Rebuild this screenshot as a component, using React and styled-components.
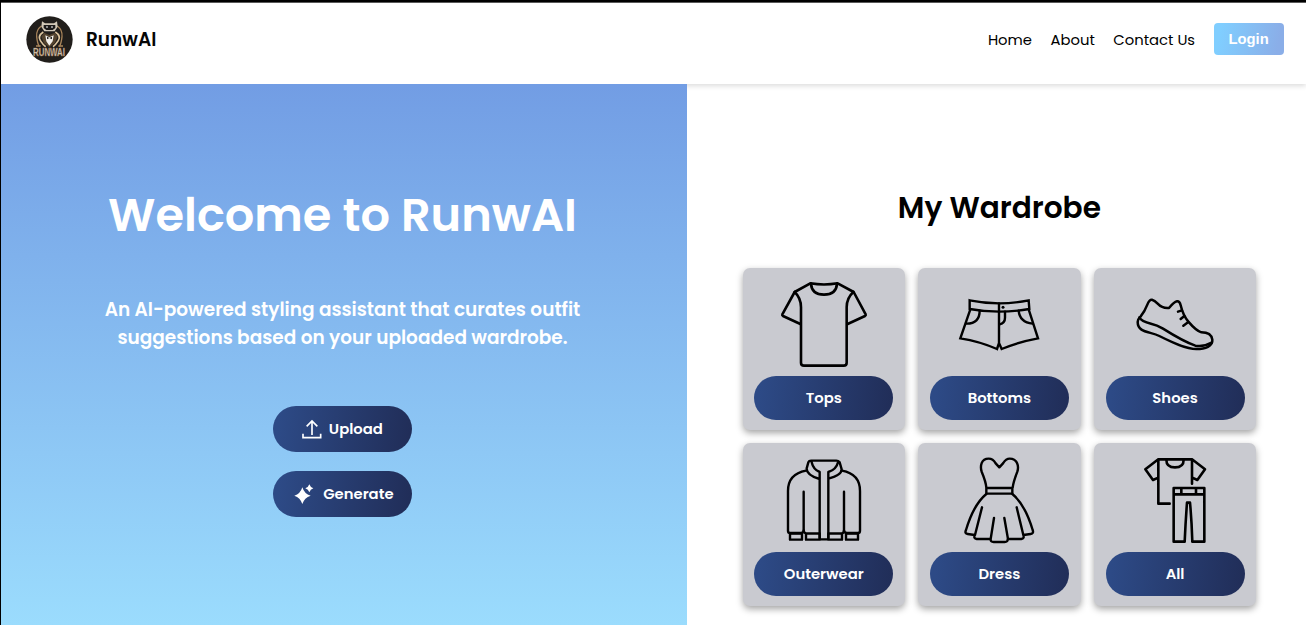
import React from "react";
import styled, { createGlobalStyle } from "styled-components";

const GlobalStyle = createGlobalStyle`
  *, *::before, *::after { box-sizing: border-box; }
  body {
    margin: 0;
    background: #fff;
    overflow: hidden;
    font-family: "Poppins", "Inter", "Open Sans", sans-serif;
  }
  button { font-family: inherit; border: 0; padding: 0; cursor: pointer; }
  h1, h2, p { margin: 0; }
`;

const Page = styled.div`
  display: flex;
  flex-direction: column;
  height: 625px;
  border-top: 2px solid #000;
  border-left: 1px solid #000;
  background: #fff;
`;

const Header = styled.header`
  display: flex;
  flex: none;
  align-items: center;
  justify-content: space-between;
  height: 82px;
  padding: 0 22.4px 9px 24.6px;
  border-top: 1px solid #5a5a5a;
  background: #fff;
  box-shadow: 0 2px 5px rgba(0, 0, 0, 0.14);
`;

const Brand = styled.div`
  display: flex;
  align-items: center;
  gap: 13.4px;
  font-size: 18.5px;
  font-weight: 600;
  color: #060606;
`;

const Nav = styled.nav`
  display: flex;
  align-items: center;
  gap: 18.5px;
`;

const NavLink = styled.a`
  padding-top: 1px;
  font-size: 14.8px;
  color: #000;
  white-space: nowrap;
`;

const LoginButton = styled.button`
  width: 70px;
  height: 32px;
  border-radius: 4px;
  color: #fff;
  font-family: Arial, "Liberation Sans", sans-serif;
  font-size: 14.8px;
  font-weight: 700;
  background: linear-gradient(100deg, #80ceff 10%, #8aaee8 90%);
`;

const Main = styled.main`
  display: flex;
  flex: 1;
  min-height: 0;
`;

const Hero = styled.section`
  display: flex;
  flex-direction: column;
  align-items: center;
  flex: none;
  position: relative;
  width: 686px;
  padding: 100px 3px 0 0;
  color: #fff;
  text-align: center;
  background: linear-gradient(180deg, #729de4 0%, #9bdcfd 100%);
`;

const HeroTitle = styled.h1`
  height: 62px;
  line-height: 62px;
  font-size: 46.3px;
  font-weight: 600;
  white-space: nowrap;
`;

const HeroText = styled.p`
  margin-top: 49.6px;
  line-height: 28px;
  font-size: 18.5px;
  font-weight: 600;
  white-space: nowrap;
`;

const TextLine = styled.span`
  display: block;
`;

const HeroActions = styled.div`
  display: flex;
  flex-direction: column;
  gap: 18.6px;
  margin-top: 54.5px;
`;

const PillButton = styled.button`
  display: flex;
  align-items: center;
  justify-content: center;
  gap: ${(p) => p.$gap || 0};
  width: 139px;
  height: ${(p) => p.$height};
  padding-left: ${(p) => p.$indent || 0};
  border-radius: 23.2px;
  color: #fff;
  font-size: 14.8px;
  font-weight: 600;
  background: linear-gradient(96deg, #2d4a86 5%, #212e59 97%);
`;

const Wardrobe = styled.section`
  display: flex;
  flex-direction: column;
  align-items: center;
  flex: 1;
  padding: 100px 0 0 5.8px;
`;

const WardrobeTitle = styled.h2`
  height: 46px;
  line-height: 47px;
  font-size: 29.6px;
  font-weight: 600;
  color: #000;
`;

const CardGrid = styled.div`
  display: grid;
  grid-template-columns: repeat(3, 162.4px);
  grid-auto-rows: 162.4px;
  gap: 13.3px;
  margin-top: 37.7px;
`;

const Card = styled.article`
  display: flex;
  flex-direction: column;
  align-items: center;
  gap: 7px;
  padding-top: 11.3px;
  border-radius: 7px;
  background: #c9cad0;
  box-shadow: 0 3px 7px rgba(0, 0, 0, 0.36);
`;

const CardIcon = styled.svg`
  display: block;
  flex: none;
  width: 90px;
  height: 90px;
  fill: none;
  stroke: #000;
  stroke-width: 7.8;
  stroke-linecap: round;
  stroke-linejoin: round;
`;

const LogoSvg = styled.svg`
  display: block;
  width: 47px;
  height: 47px;
  overflow: visible;
`;

function Logo() {
  return (
    <LogoSvg viewBox="0 0 141 141">
      <circle cx="70.5" cy="70.5" r="69.5" fill="#211e1b" />
      <g fill="none" stroke="#a9855b" strokeWidth="4">
        <path d="M46 30Q30 42 32 62t8 30M94 30q16 12 14 32t-8 30" />
        <path d="M30 90h14M97 90h14" />
      </g>
      <g fill="none" stroke="#dcc59e" strokeWidth="5">
        <path d="M52 48Q34 60 43 74t16 18M88 48q18 12 9 26T81 92" />
      </g>
      <path d="m48 16 9 6h27l9-6 2 16-9 14H55l-9-14z" fill="#d3c9b8" />
      <path d="M53 27h35v9l-8 6H61l-8-6z" fill="#1d1b1a" />
      <path d="M60 33h6m9 0h6" stroke="#fff" strokeWidth="3" />
      <path d="m54 50 16 7 17-7 8 12-9 20-16 12-16-12-8-20z" fill="#54442f" />
      <path d="m58 58 12 6 13-6-3 18-10 13-9-13z" fill="#f4f2ec" />
      <path d="m63 62 7 4 8-4v8l-8-4-7 4z" fill="#201d1b" />
      <text
        x="69"
        y="119"
        textAnchor="middle"
        fontFamily="Liberation Sans, sans-serif"
        fontSize="32"
        fontWeight="700"
        textLength="96"
        lengthAdjust="spacingAndGlyphs"
        fill="#ddd7cf"
        stroke="#8a6238"
        strokeWidth="1.5"
      >
        RUNWAI
      </text>
    </LogoSvg>
  );
}

const ICONS = {
  Tops: (
    <CardIcon viewBox="131 56 270 270">
      <path d="M225 69q41 7 82 0l48 26 36 67q1 3-2 5l-52 24M225 69l-47 26-37 67q-1 3 2 5l52 24" />
      <path d="M227 70q2 33 39 33t39-33M178 95q19 18 19 46v166q0 9 9 9h119q9 0 9-9V141q0-28 20-46" />
    </CardIcon>
  ),
  Bottoms: (
    <CardIcon viewBox="132 56 270 270">
      <g strokeWidth="7.2" strokeLinejoin="miter">
        <path d="M179 120q44 9 88 9t89-9l2 26q-45 8-91 8t-88-8z" />
        <path d="m181 147-30 87q58 9 110 32l6-18 8 18q54-22 109-32l-28-87M267 129v119" />
        <path d="M209 151q0 38-39 39M326 151q3 35 42 39M285 154v18q0 16-16 20" />
      </g>
      <circle cx="279" cy="141" r="4.5" fill="#000" stroke="none" />
    </CardIcon>
  ),
  Shoes: (
    <CardIcon viewBox="132 56 270 270">
      <g strokeWidth="7.5">
        <path d="M164 168q12-14 20-35 6-16 14-15 8 2 17 12 14 15 34 13 15-18 24-20 8-1 11 12 7 30 23 49 24 28 39 32c20 0 31 8 33 22 2 20-21 28-48 28-31 0-69-18-111-39-27-14-65-9-65-42 0-6 4-12 9-17z" />
        <path d="M160 171q6 13 35 19 18 4 36 15 62 39 97 51 27 4 49-9M276 154l12-4M284 176l11-9M292 196l14-10" />
      </g>
    </CardIcon>
  ),
  Outerwear: (
    <CardIcon viewBox="131 56 270 270">
      <g strokeWidth="7.2">
        <path d="M219 78q2-5 8-5h76q6 0 10 5l6 21q0 18-40 28M219 78l-5 18q-1 20 39 32M229 78q5 22 24 29v198M308 78q-5 22-29 29v198" />
        <path d="M212 103q-54 10-54 61v119q0 7 6 7h34q7-1 7-8V166M320 103q54 10 54 61v119q0 7-6 7h-34q-8-1-8-8V166" />
        <path d="M164 292h36v18h-36zM212 292h41v18h-41zM279 292h41v18h-41zM332 292h36v18h-36zM205 282q1 9 8 9h40M326 282q0 9-7 9h-40M252 309h28" />
      </g>
    </CardIcon>
  ),
  Dress: (
    <CardIcon viewBox="132 56 270 270">
      <g strokeWidth="7.2">
        <path d="M229 154q-1-17-14-48c-5-16-2-39 21-39q13 0 21 14l11 12 11-12q9-14 20-14c24 0 28 23 23 39q-12 31-14 48M229 155h78v17h-78z" />
        <path d="M229 173q-38 31-61 108-5 11 5 12l21 3q-4 11 6 12h42q-1 9 9 9h33q10 0 9-9h41q10-1 6-12l22-3q10-1 6-12-23-77-61-108M216 213l-21 83M320 213l20 83M252 245l-10 63M283 245l11 63" />
      </g>
    </CardIcon>
  ),
  All: (
    <CardIcon viewBox="132 56 270 270">
      <path d="M251 202h-34V69l-39 30 23 32 16-7M217 69h101v73M318 69l39 30-23 32-15-7M241 70q0 23 26 23t26-23" />
      <path d="M263 155h92v161h-36q-2-65-7-117h-9q-4 52-7 117h-33zM263 174h92M286 156v17M330 156v17" />
    </CardIcon>
  ),
};

const CATEGORIES = ["Tops", "Bottoms", "Shoes", "Outerwear", "Dress", "All"];

function UploadIcon() {
  return (
    <svg width="20" height="20" viewBox="0 0 60 60" fill="none" stroke="#fff" strokeWidth="5">
      <path d="M30 48V6M14 22 30 6l16 16M3 44v12h53V44" />
    </svg>
  );
}

function SparkleIcon() {
  return (
    <svg width="20" height="20" viewBox="0 0 60 60" fill="#fff">
      <path d="M25 10q6 20 25 25-19 6-25 25Q19 41 1 35q18-5 24-25zM46 1q3 9 12 12-9 3-12 12-3-9-12-12 9-3 12-12z" />
    </svg>
  );
}

export default function App() {
  return (
    <>
      <GlobalStyle />
      <Page>
        <Header>
          <Brand>
            <Logo />
            <span>RunwAI</span>
          </Brand>
          <Nav>
            <NavLink>Home</NavLink>
            <NavLink>About</NavLink>
            <NavLink>Contact Us</NavLink>
            <LoginButton>Login</LoginButton>
          </Nav>
        </Header>
        <Main>
          <Hero>
            <HeroTitle>Welcome to RunwAI</HeroTitle>
            <HeroText>
              <TextLine>An AI-powered styling assistant that curates outfit</TextLine>
              <TextLine>suggestions based on your uploaded wardrobe.</TextLine>
            </HeroText>
            <HeroActions>
              <PillButton $height="46.3px" $gap="6.6px">
                <UploadIcon />
                Upload
              </PillButton>
              <PillButton $height="46.3px" $gap="9.4px" $indent="2.4px">
                <SparkleIcon />
                Generate
              </PillButton>
            </HeroActions>
          </Hero>
          <Wardrobe>
            <WardrobeTitle>My Wardrobe</WardrobeTitle>
            <CardGrid>
              {CATEGORIES.map((name) => (
                <Card key={name}>
                  {ICONS[name]}
                  <PillButton $height="44.4px">{name}</PillButton>
                </Card>
              ))}
            </CardGrid>
          </Wardrobe>
        </Main>
      </Page>
    </>
  );
}
